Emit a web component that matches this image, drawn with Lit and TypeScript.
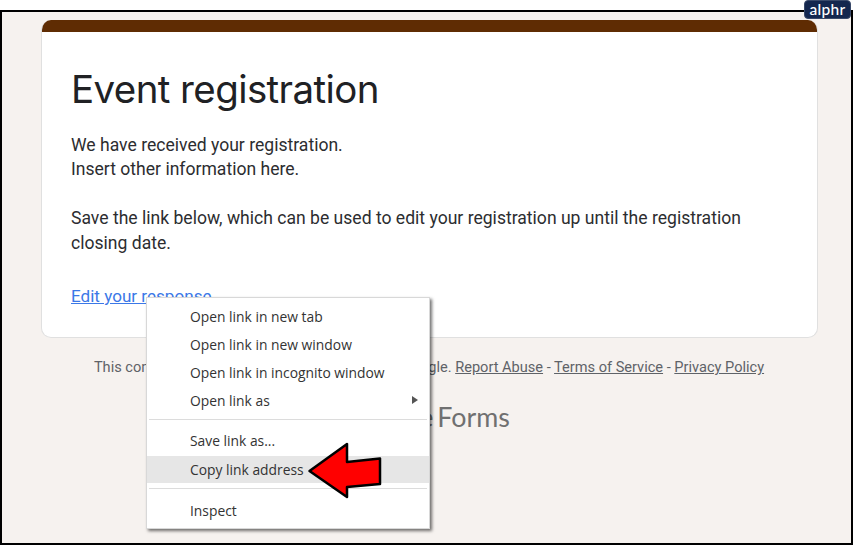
import { LitElement, html, css } from "lit";
import { customElement } from "lit/decorators.js";

@customElement("app-root")
export class AppRoot extends LitElement {
  static styles = css`
    :host { display: block; position: relative; width: 854px; height: 546px; background: #fff; overflow: hidden; font-family: Roboto, sans-serif; }
    .frame { box-sizing: border-box; margin: 10px 0 0 0; width: 853px; height: 535px; border: 2px solid #000; background: #f6f2ef; padding: 8px 33px 0 39px; }
    .card { background: #fff; border: 1px solid #e0e0e0; border-top: 0; border-radius: 10px; height: 318px; box-sizing: border-box; overflow: hidden; }
    .band { height: 12px; background: #5f2c03; margin: 0 -1px; }
    .content { padding: 31px 29px 0 29px; color: #202124; }
    h1 { margin: 0; font: 400 38.5px/52px Inter, sans-serif; letter-spacing: -0.6px; color: #202124; }
    .text { margin-top: 18px; font-size: 17.57px; line-height: 24.4px; color: #2c2d30; }
    .gap { height: 24.4px; }
    .link { display: block; margin-top: 29px; font-size: 17.1px; line-height: 24px; color: #3b78e7; text-decoration: underline; }
    .foot { margin: 17px 1px 0 0; text-align: center; color: #5f6368; font-size: 14.58px; line-height: 24px; }
    .foot u { color: #5f6368; }
    .forms { margin-top: 20px; text-align: center; word-spacing: -3px; color: #707070; font: 400 26.8px/36px Lato, sans-serif; }
    .menu { position: absolute; left: 146px; top: 297px; width: 284px; height: 232px; box-sizing: border-box; background: #fff; border: 1px solid #d8d8d8; box-shadow: 2px 2px 3px rgba(0,0,0,.55); padding-top: 5px; font: 400 13.85px/28px "Open Sans", sans-serif; color: #333; }
    .item { height: 28px; padding-left: 43px; position: relative; }
    .item.on { background: #e6e6e6; margin-top: 1px; height: 27px; }
    .tri { position: absolute; right: 11px; top: 9px; width: 0; height: 0; border-left: 6px solid #555; border-top: 4.5px solid transparent; border-bottom: 4.5px solid transparent; }
    hr { border: 0; height: 1px; background: #dcdcdc; margin: 4px 2px 7px; }
    hr.low { margin: 5px 2px 8px; }
    .arrow { position: absolute; left: 306px; top: 441px; }
    .badge { position: absolute; left: 804px; top: 0; width: 47px; height: 19px; background: #14274e; border: 1px solid #3a4a6a; box-sizing: border-box; border-radius: 4px; color: #fff; font: 500 15.5px/16px Lato, sans-serif; text-align: center; letter-spacing: .3px; }
  `;

  render() {
    return html`
      <div class="frame">
        <div class="card">
          <div class="band"></div>
          <div class="content">
            <h1>Event registration</h1>
            <div class="text">
              We have received your registration.<br />Insert other information here.
              <div class="gap"></div>
              Save the link below, which can be used to edit your registration up until the registration closing date.
            </div>
            <a class="link">Edit your response</a>
          </div>
        </div>
        <div class="foot">This content is neither created nor endorsed by Google. <u>Report Abuse</u> - <u>Terms of Service</u> - <u>Privacy Policy</u></div>
        <div class="forms">Google Forms</div>
      </div>
      <div class="menu">
        <div class="item">Open link in new tab</div>
        <div class="item">Open link in new window</div>
        <div class="item">Open link in incognito window</div>
        <div class="item">Open link as<span class="tri"></span></div>
        <hr />
        <div class="item">Save link as...</div>
        <div class="item on">Copy link address</div>
        <hr class="low" />
        <div class="item">Inspect</div>
      </div>
      <svg class="arrow" width="80" height="60" viewBox="0 0 80 60">
        <path d="M3.500 30 L41 3 L41 21 L74 17.500 L74 43 L41 46 L41 56 Z" fill="#f00" stroke="#000" stroke-width="2.500" stroke-linejoin="round" />
      </svg>
      <div class="badge">alphr</div>
    `;
  }
}
